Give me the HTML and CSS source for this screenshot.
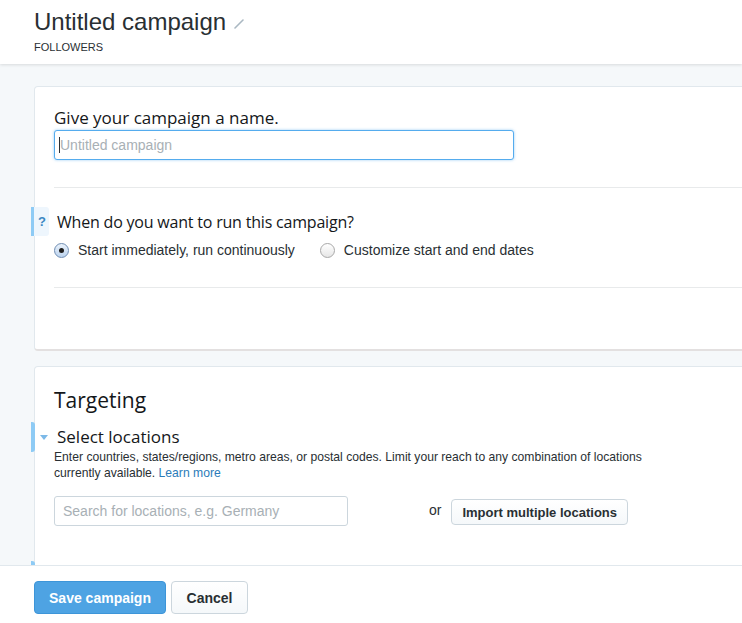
FILE: index.html
```html
<!DOCTYPE html>
<html>
<head>
<meta charset="utf-8">
<link rel="stylesheet" href="styles.css">
</head>
<body>
<header class="top">
  <div class="title-row">
    <h1 class="title">Untitled campaign</h1>
    <svg class="pencil" width="10" height="10" viewBox="0 0 10 10"><path d="M1 9 L9 1" stroke="#aab8c2" stroke-width="1.6" stroke-linecap="round"/></svg>
  </div>
  <div class="subtitle">FOLLOWERS</div>
</header>

<main class="main">
  <section class="card">
    <div class="field">
      <h2 class="label">Give your campaign a name.</h2>
      <div class="input focused"><span class="caret"></span><span class="ph">Untitled campaign</span></div>
    </div>
    <hr class="divider first">
    <div class="field help-field">
      <span class="help-tab">?</span>
      <h2 class="label indent narrow">When do you want to run this campaign?</h2>
      <div class="radios">
        <label class="radio"><span class="dot checked"></span>Start immediately, run continuously</label>
        <label class="radio"><span class="dot"></span>Customize start and end dates</label>
      </div>
    </div>
    <hr class="divider second">
  </section>

  <section class="card card2">
    <h2 class="section-title">Targeting</h2>
    <div class="loc">
      <span class="tab-bar"></span>
      <span class="arrow"></span>
      <h3 class="label indent">Select locations</h3>
      <p class="desc">Enter countries, states/regions, metro areas, or postal codes. Limit your reach to any combination of locations currently available. <a class="link">Learn more</a></p>
      <div class="search-row">
        <div class="input search"><span class="ph">Search for locations, e.g. Germany</span></div>
        <span class="or">or</span>
        <button class="btn">Import multiple locations</button>
      </div>
    </div>
    <div class="loc next">
      <span class="tab-bar"></span>
      <h3 class="label indent">Select gender</h3>
    </div>
  </section>
</main>

<footer class="footer">
  <button class="btn primary">Save campaign</button>
  <button class="btn cancel">Cancel</button>
</footer>
</body>
</html>
```

FILE: styles.css
```css
* { box-sizing: border-box; }
html, body { margin: 0; padding: 0; }
body {
  background: #f5f8fa;
  font-family: "Liberation Sans", Arial, sans-serif;
  color: #292f33;
  overflow: hidden;
  height: 623px;
}
.top {
  background: #fff;
  height: 64px;
  padding: 8px 34px 0;
  box-shadow: 0 1px 3px rgba(0,0,0,0.12);
  position: relative;
  z-index: 2;
}
.title-row { display: flex; align-items: center; gap: 8px; }
.title {
  margin: 0;
  font-size: 24px;
  line-height: 28px;
  font-weight: normal;
  color: #292f33;
}
.pencil { margin-top: 4px; }
.subtitle {
  margin-top: 4px;
  font-size: 11px;
  line-height: 14px;
  color: #292f33;
}
.main {
  padding: 22px 0 0 34px;
  width: 800px;
}
.card {
  background: #fff;
  border: 1px solid #e1e8ed;
  border-bottom: 2px solid #e3e0e0;
  border-radius: 4px;
  padding: 21px 0 0 19px;
  width: 760px;
  height: 265px;
}
.card2 {
  margin-top: 15px;
  height: 260px;
  padding-top: 21px;
}
.label {
  margin: 0;
  font-family: "Open Sans", sans-serif;
  font-size: 17px;
  line-height: 20px;
  font-weight: normal;
  color: #14171a;
}
.label.narrow { font-size: 16px; letter-spacing: -0.2px; }
.label.indent { margin-left: 3px; }
.input {
  margin-top: 2px;
  width: 460px;
  height: 30px;
  border: 1px solid #ccd6dd;
  border-radius: 3px;
  display: flex;
  align-items: center;
  padding-left: 4px;
  font-size: 14px;
  background: #fff;
}
.input.focused {
  border-color: #55acee;
  box-shadow: 0 0 3px rgba(85,172,238,0.6);
}
.caret {
  width: 1px;
  height: 16px;
  background: #292f33;
}
.ph { color: #a8b0b5; }
.divider {
  border: 0;
  border-top: 1px solid #e8eaeb;
  margin: 0;
}
.divider.first { margin-top: 27px; }
.divider.second { margin-top: 29px; }
.help-field { position: relative; padding-top: 24px; }
.help-tab {
  position: absolute;
  left: -23px;
  top: 19px;
  width: 18px;
  height: 29px;
  background: #eef6fd;
  border-left: 3px solid #8ecbf5;
  border-radius: 0 3px 3px 0;
  color: #3b88c3;
  font-weight: bold;
  font-size: 13px;
  line-height: 29px;
  padding-left: 4px;
}
.radios {
  display: flex;
  gap: 25px;
  margin-top: 10px;
  font-size: 14px;
  line-height: 16px;
}
.radio { display: flex; align-items: center; color: #292f33; }
.dot {
  width: 15px;
  height: 15px;
  border-radius: 50%;
  border: 1px solid #a8a8a8;
  background: linear-gradient(#fff, #e6e6e6);
  margin-right: 9px;
  position: relative;
}
.dot.checked {
  border-color: #6f8db3;
  background: linear-gradient(#eaf2fb, #bcd3ee);
}
.dot.checked::after {
  content: "";
  position: absolute;
  left: 4px;
  top: 4px;
  width: 5px;
  height: 5px;
  border-radius: 50%;
  background: #1e1e1e;
}
.section-title {
  margin: 0;
  font-family: "Open Sans", sans-serif;
  font-size: 21px;
  line-height: 24px;
  font-weight: normal;
  color: #14171a;
}
.loc { position: relative; margin-top: 15px; }
.tab-bar {
  position: absolute;
  left: -23px;
  top: -5px;
  width: 4px;
  height: 30px;
  background: #8ecbf5;
  border-radius: 0 3px 3px 0;
}
.arrow {
  position: absolute;
  left: -14px;
  top: 8px;
  width: 0;
  height: 0;
  border-left: 4px solid transparent;
  border-right: 4px solid transparent;
  border-top: 5px solid #7cb9e8;
}
.desc {
  margin: 2px 0 0;
  font-size: 12.15px;
  line-height: 16px;
  width: 610px;
  color: #292f33;
}
.link { color: #2b7bb9; }
.search-row {
  display: flex;
  align-items: center;
  margin-top: 15px;
}
.input.search {
  width: 294px;
  padding-left: 8px;
  margin-top: 0;
}
.or {
  margin-left: 81px;
  font-size: 14px;
  margin-top: -2px;
}
.btn {
  font-family: "Liberation Sans", Arial, sans-serif;
  font-weight: bold;
  font-size: 13px;
  color: #292f33;
  height: 26px;
  padding: 0 10px;
  border: 1px solid #ccd6dd;
  border-radius: 4px;
  background: linear-gradient(#fff, #f5f8fa);
  margin-left: 10px;
  margin-top: 2px;
}
.loc.next { margin-top: 40px; }
.footer {
  position: fixed;
  left: 0;
  right: 0;
  bottom: 0;
  height: 58px;
  background: #fff;
  border-top: 1px solid #e1e8ed;
  padding: 15px 0 0 34px;
  display: flex;
  gap: 5px;
  z-index: 3;
}
.footer .btn {
  height: 33px;
  margin: 0;
  font-size: 14px;
  border-radius: 4px;
}
.btn.primary {
  width: 132px;
  background: #4ea3e3;
  border-color: #3d95d8;
  color: #fff;
}
.btn.cancel {
  width: 77px;
  background: linear-gradient(#fff, #f5f8fa);
}
```
